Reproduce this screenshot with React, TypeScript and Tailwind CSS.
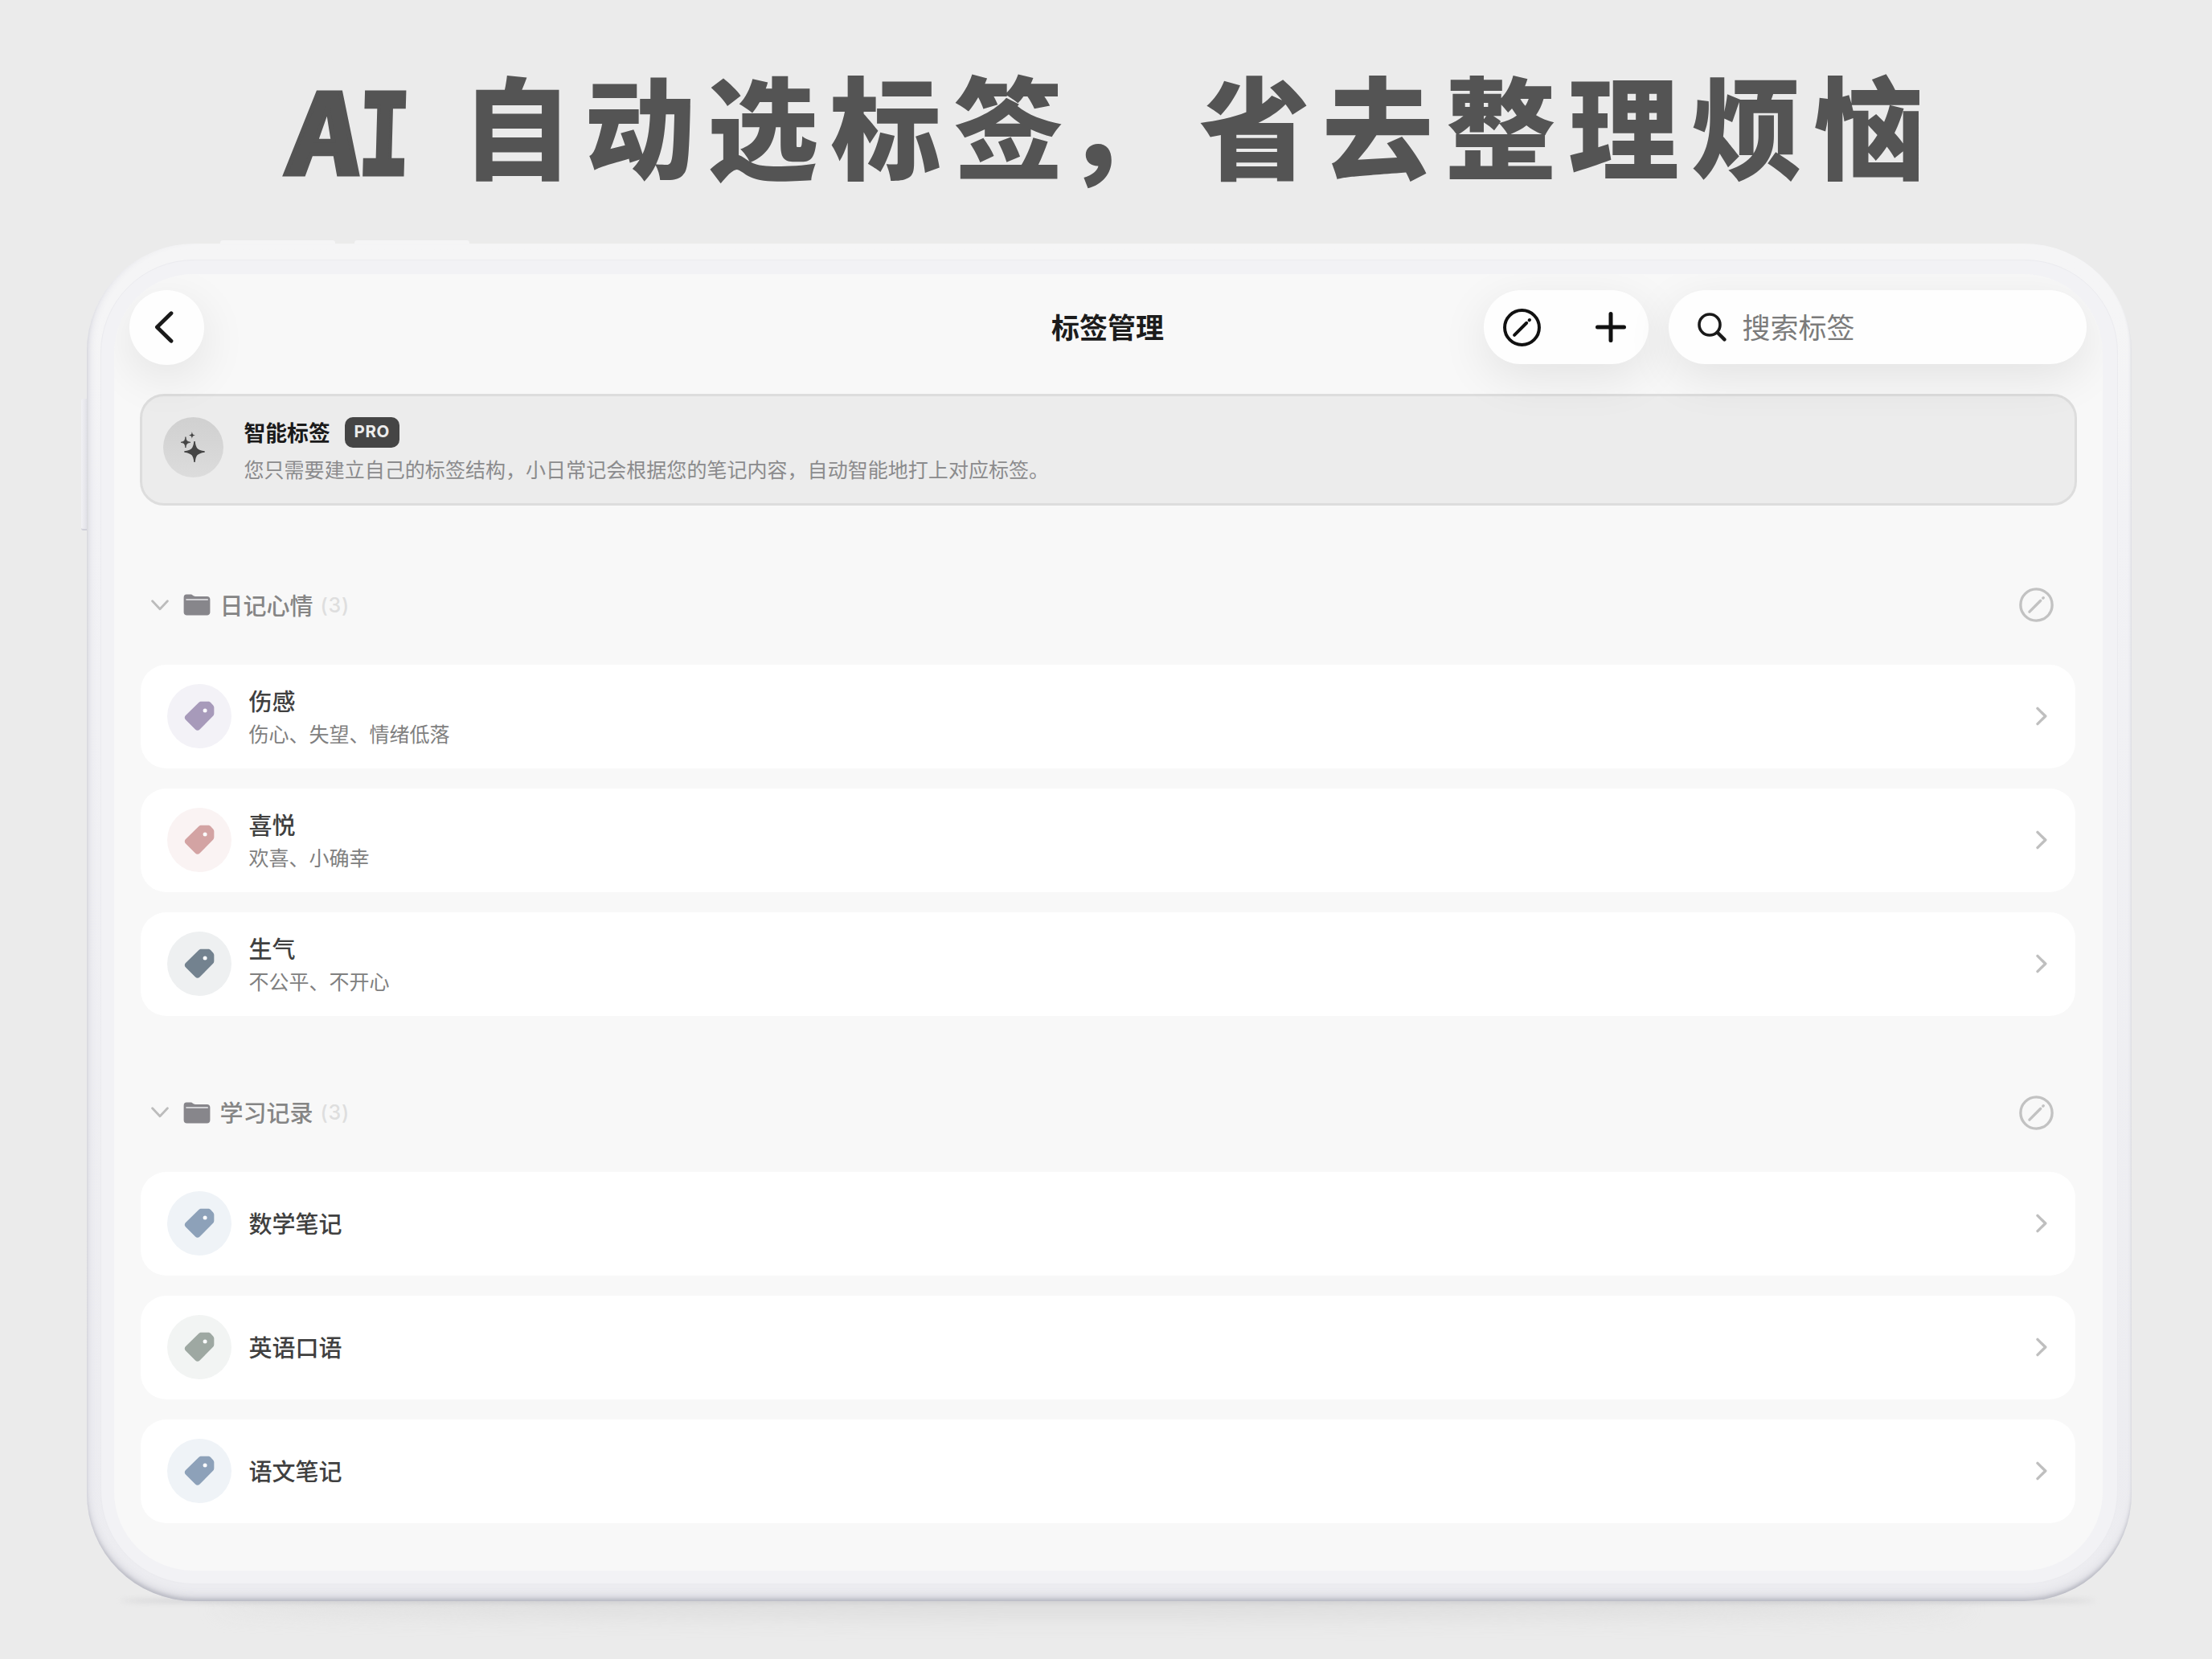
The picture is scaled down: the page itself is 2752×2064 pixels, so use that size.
import React from 'react';

const INNER_TAG =
  'M27 2H37.2C38.6 2 39.6 2.4 40.6 3.4L44.4 7.4C45.4 8.4 46 9.6 46 11V20.2C46 21.6 45.5 22.8 44.5 23.8L24.6 43.8C22.6 45.8 20 45.8 18 43.8L3.6 29.4C1.6 27.4 1.6 24.8 3.6 22.8L23.2 3.6C24.2 2.6 25.6 2 27 2Z';

function TagIcon({ className }: { className: string }) {
  return (
    <svg viewBox="0 0 48 48" className={`h-[40px] w-[40px] ${className}`}>
      <path d={INNER_TAG} fill="currentColor" />
      <circle cx="32.5" cy="15.5" r="3" fill="#fbfbfd" />
    </svg>
  );
}

function EditCircle({ className, stroke }: { className: string; stroke: number }) {
  return (
    <svg viewBox="0 0 46 46" className={className} fill="none" stroke="currentColor" strokeLinecap="round">
      <circle cx="23" cy="23" r="21" strokeWidth={stroke} />
      <path d="M13.8 32.2L28.6 17.4" strokeWidth={stroke} />
      <path d="M31.9 14.1L32.3 13.7" strokeWidth={stroke} />
    </svg>
  );
}

function Folder() {
  return (
    <svg viewBox="0 0 34 27" className="h-[27px] w-[34px]">
      <path
        d="M4 0.6H9C10.4 0.6 11 1 12 1.8C13 2.6 13.6 2.9 15 2.9H29.5C32 2.9 33.4 4.3 33.4 6.8V22.4C33.4 25 32 26.4 29.5 26.4H4.6C2 26.4 0.6 25 0.6 22.4V4.4C0.6 2 1.8 0.6 4 0.6Z"
        fill="#87868b"
      />
      <path d="M4.2 7H30" stroke="#d2d2d5" strokeWidth="2.2" strokeLinecap="round" />
    </svg>
  );
}

function Sparkles() {
  return (
    <svg viewBox="0 0 30 38" className="h-[38px] w-[30px]" fill="#454545">
      <path d="M17 12C17.9 20.5 19.6 23.6 29.6 25C19.6 26.4 17.9 29.5 17 38C16.1 29.5 14.4 26.4 4.4 25C14.4 23.6 16.1 20.5 17 12Z" stroke="#454545" strokeWidth="1.4" />
      <path d="M5.9 6.6C6.6 11.2 7.4 12.4 12 13.3C7.4 14.2 6.6 15.4 5.9 20C5.2 15.4 4.4 14.2 0 13.3C4.4 12.4 5.2 11.2 5.9 6.6Z" stroke="#454545" strokeWidth="0.8" />
      <path d="M13.9 0C14.4 3.3 15 3.9 17.9 4.4C15 4.9 14.4 5.5 13.9 8.8C13.4 5.5 12.8 4.9 9.9 4.4C12.8 3.9 13.4 3.3 13.9 0Z" />
    </svg>
  );
}

type Tag = { name: string; note?: string; tint: string; disc: string };

const moods: Tag[] = [
  { name: '伤感', note: '伤心、失望、情绪低落', tint: 'text-[#a79aba]', disc: 'bg-[#f3f2f7]' },
  { name: '喜悦', note: '欢喜、小确幸', tint: 'text-[#d3a3a3]', disc: 'bg-[#faf3f3]' },
  { name: '生气', note: '不公平、不开心', tint: 'text-[#73828f]', disc: 'bg-[#eef0f1]' },
];

const studies: Tag[] = [
  { name: '数学笔记', tint: 'text-[#8da1b9]', disc: 'bg-[#eff3f7]' },
  { name: '英语口语', tint: 'text-[#9ea8a2]', disc: 'bg-[#f2f4f3]' },
  { name: '语文笔记', tint: 'text-[#8da1b9]', disc: 'bg-[#eff3f7]' },
];

function TagCard({ tag }: { tag: Tag }) {
  return (
    <div className="flex h-[129px] items-center rounded-[32px] bg-white pr-[35px] pl-[33px]">
      <div className={`flex h-[80px] w-[80px] items-center justify-center rounded-full ${tag.disc}`}>
        <TagIcon className={tag.tint} />
      </div>
      <div className={`ml-[22px] flex flex-1 flex-col ${tag.note ? '' : 'pb-[3px]'}`}>
        <div className="text-[29px] leading-[42px] font-medium text-[#404040]">{tag.name}</div>
        {tag.note && <div className="text-[25px] leading-[40px] text-[#808080]">{tag.note}</div>}
      </div>
      <svg viewBox="0 0 14 24" className="h-[24px] w-[14px]" fill="none" stroke="#bfbfbf" strokeWidth="3.4" strokeLinecap="round" strokeLinejoin="round">
        <path d="M2 2.4L11.8 12L2 21.6" />
      </svg>
    </div>
  );
}

function Section({ title, tags, headClass }: { title: string; tags: Tag[]; headClass: string }) {
  return (
    <section className="pr-[2px]">
      <div className={`flex items-center pr-[27px] pl-[13px] ${headClass}`}>
        <svg viewBox="0 0 22 14" className="h-[14px] w-[22px]" fill="none" stroke="#bcbcbc" strokeWidth="2.8" strokeLinecap="round" strokeLinejoin="round">
          <path d="M1.6 1.8L11 11.8L20.4 1.8" />
        </svg>
        <div className="ml-[18px]">
          <Folder />
        </div>
        <div className="ml-[12px] pb-[2px] text-[29px] leading-[42px] font-medium text-[#858585]">{title}</div>
        <div className="ml-[9px] font-['Inter','Noto_Sans_CJK_SC',sans-serif] text-[25px] leading-[36px] font-medium tracking-[0.8px] text-[#dedede]">(3)</div>
        <EditCircle className="ml-auto h-[43px] w-[43px] text-[#c2c2c2]" stroke={3.6} />
      </div>
      <div className="flex flex-col gap-[25px]">
        {tags.map((t) => (
          <TagCard key={t.name} tag={t} />
        ))}
      </div>
    </section>
  );
}

function Headline() {
  return (
    <h1 className="flex h-[303px] pl-[356px] whitespace-nowrap text-[#545454]">
      <span className="mt-[58px] flex w-[218px] font-['DejaVu_Sans_Mono',monospace] text-[140px] leading-[222px] font-bold [-webkit-text-stroke:5px_#545454]">
        <span className="inline-block w-[89px] origin-left scale-x-112 -skew-x-5">A</span>
        <span className="inline-block w-[86px] origin-left scale-x-78 -skew-x-2">I</span>
      </span>
      <span className="mt-[49px] text-[138px] leading-[206px] font-black tracking-[15px]">
        自动选标签<span className="-ml-[15px] mr-[15px]">，</span>省去整理烦恼
      </span>
    </h1>
  );
}

const floating = 'bg-[#fefefe] shadow-[0_16px_60px_rgba(0,0,0,0.09)]';

export default function App() {
  return (
    <div className="relative h-[2064px] w-[2752px] overflow-hidden bg-[#ebebeb] font-['Noto_Sans_CJK_SC',sans-serif]">
      <Headline />

      <div className="relative ml-[108px] h-[1689px] w-[2544px]">
        <div className="absolute top-[-4px] left-[166px] h-[8px] w-[143px] rounded-t-[3px] bg-[#f5f5f6]" />
        <div className="absolute top-[-4px] left-[333px] h-[8px] w-[143px] rounded-t-[3px] bg-[#f5f5f6]" />
        <div className="absolute top-[193px] left-[-7px] h-[164px] w-[9px] rounded-l-[3px] border-b-2 border-[#d0d0d8] bg-linear-to-r from-[#f1f1f4] to-[#dddde4]" />
        <div className="absolute bottom-[-3px] left-[40px] h-[7px] w-[2460px] rounded-[50%] bg-[#b9b9bd] blur-[3px]" />
        <div className="absolute bottom-[-20px] left-[160px] h-[24px] w-[2180px] rounded-[50%] bg-[#dcdcdc] blur-[12px]" />

        <div className="relative h-full w-full rounded-[134px] bg-linear-to-b from-[#f5f5f6] from-5% via-[#f2f2f5] via-20% to-[#ececf0] p-[17px] pt-[20px] pb-[21px] shadow-[inset_0_-4px_4px_-1px_#babbc4,inset_0_-12px_12px_-6px_#d3d3da,inset_7px_-3px_9px_-3px_#e2e2e8]">
          <div className="h-full w-full rounded-[116px] border-[1.5px] border-[#ebebef] bg-[#f2f2f5] pt-[16.5px] pr-[18.5px] pb-[16.5px] pl-[15.5px]">
            <div className="flex h-full w-full flex-col overflow-hidden rounded-[98px] bg-[#f8f8f8] pt-[19px]">
              <header className="relative z-10 grid h-[95px] grid-cols-[1fr_auto_1fr] items-center pr-[20px] pl-[19px]">
                <button className={`flex h-[93px] w-[93px] items-center justify-center rounded-full ${floating}`}>
                  <svg viewBox="0 0 24 40" className="mr-[7px] h-[40px] w-[24px]" fill="none" stroke="#1a1a1a" strokeWidth="4.8" strokeLinecap="round" strokeLinejoin="round">
                    <path d="M21 2.8L3.4 20L21 37.2" />
                  </svg>
                </button>
                <div className="pb-[2px] text-[35px] leading-[50px] font-bold text-[#1c1c1c]">标签管理</div>
                <div className="flex justify-end gap-[25px]">
                  <div className={`flex h-[92px] w-[205px] items-center justify-between rounded-full pr-[28px] pl-[24px] text-[#111111] ${floating}`}>
                    <EditCircle className="h-[47px] w-[47px]" stroke={3.9} />
                    <svg viewBox="0 0 38 38" className="h-[38px] w-[38px]" stroke="currentColor" strokeWidth="5" strokeLinecap="round">
                      <path d="M19 2.5V35.5M2.5 19H35.5" />
                    </svg>
                  </div>
                  <div className={`flex h-[92px] w-[520px] items-center rounded-full pl-[36px] ${floating}`}>
                    <svg viewBox="0 0 36 36" className="h-[36px] w-[36px]" fill="none" stroke="#1a1a1a" strokeWidth="3.6" strokeLinecap="round">
                      <circle cx="15" cy="15" r="13" />
                      <path d="M24.8 24.8L33.4 33.4" strokeWidth="4.4" />
                    </svg>
                    <span className="ml-[20px] pb-[2px] text-[35px] leading-[50px] text-[#7b7b7b]">搜索标签</span>
                  </div>
                </div>
              </header>

              <main className="mt-[35px] pr-[32px] pl-[33px]">
                <div className="-ml-px flex h-[139px] items-start rounded-[30px] border-[3px] border-[#dddddd] bg-[#ececec] pl-[26px]">
                  <div className="mt-[26px] flex h-[75px] w-[75px] items-center justify-center rounded-full bg-linear-to-b from-[#d0d0d0] to-[#dcdcdc]">
                    <Sparkles />
                  </div>
                  <div className="ml-[26px] pt-[24px]">
                    <div className="flex h-[42px] items-center">
                      <span className="text-[26.8px] leading-[40px] font-bold text-[#1a1a1a]">智能标签</span>
                      <span className="ml-[18px] flex h-[38px] w-[68px] items-center justify-center rounded-[10px] bg-[#454545] font-['Inter',sans-serif] text-[20.5px] font-bold tracking-[0.6px] text-[#ececec]">
                        PRO
                      </span>
                    </div>
                    <p className="mt-[6px] text-[25px] leading-[36px] tracking-[0.04px] text-[#8b8b8d]">
                      您只需要建立自己的标签结构，小日常记会根据您的笔记内容，自动智能地打上对应标签。
                    </p>
                  </div>
                </div>

                <Section title="日记心情" tags={moods} headClass="mt-[50px] h-[148px]" />
                <Section title="学习记录" tags={studies} headClass="mt-[47px] h-[147px]" />
              </main>
            </div>
          </div>
        </div>
      </div>
    </div>
  );
}
